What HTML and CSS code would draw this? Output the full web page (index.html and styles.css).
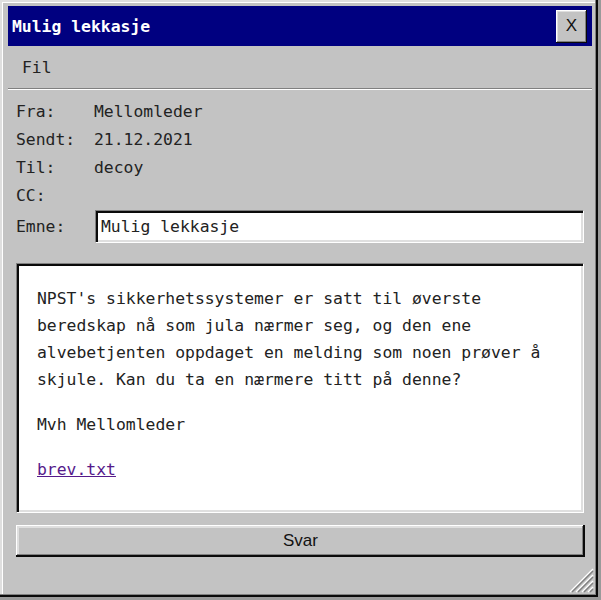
FILE: index.html
```html
<!DOCTYPE html>
<html lang="no">
<head>
<meta charset="utf-8">
<title>Mulig lekkasje</title>
<link rel="stylesheet" href="styles.css">
</head>
<body>
<div class="window">
  <div class="titlebar">
    <span class="title">Mulig lekkasje</span>
    <button class="close" type="button">X</button>
  </div>
  <div class="menubar">
    <span class="menu-item">Fil</span>
  </div>
  <div class="content">
    <div class="fields">
      <span class="label">Fra:</span><span class="value">Mellomleder</span>
      <span class="label">Sendt:</span><span class="value">21.12.2021</span>
      <span class="label">Til:</span><span class="value">decoy</span>
      <span class="label">CC:</span><span class="value"></span>
      <span class="label">Emne:</span><span class="value"><span class="subject">Mulig lekkasje</span></span>
    </div>
    <div class="message">
      <p>NPST's sikkerhetssystemer er satt til øverste beredskap nå som jula nærmer seg, og den ene alvebetjenten oppdaget en melding som noen prøver å skjule. Kan du ta en nærmere titt på denne?</p>
      <p>Mvh Mellomleder</p>
      <p><a class="attachment" href="#">brev.txt</a></p>
    </div>
    <button class="reply" type="button">Svar</button>
  </div>
  <svg class="grip" width="26" height="26" viewBox="0 0 26 26">
    <line x1="25" y1="2" x2="2" y2="25" stroke="#ffffff" stroke-width="1.5"/>
    <line x1="25" y1="4" x2="4" y2="25" stroke="#808080" stroke-width="1.5"/>
    <line x1="25" y1="8" x2="8" y2="25" stroke="#ffffff" stroke-width="1.5"/>
    <line x1="25" y1="10" x2="10" y2="25" stroke="#808080" stroke-width="1.5"/>
    <line x1="25" y1="14" x2="14" y2="25" stroke="#ffffff" stroke-width="1.5"/>
    <line x1="25" y1="16" x2="16" y2="25" stroke="#808080" stroke-width="1.5"/>
    <line x1="25" y1="20" x2="20" y2="25" stroke="#ffffff" stroke-width="1.5"/>
    <line x1="25" y1="22" x2="22" y2="25" stroke="#808080" stroke-width="1.5"/>
  </svg>
</div>
</body>
</html>
```
FILE: styles.css
```css
html, body {
  margin: 0;
  padding: 0;
}
body {
  background: #9a9a9a;
  width: 601px;
  height: 600px;
  overflow: hidden;
}
.window {
  position: relative;
  box-sizing: border-box;
  width: 598px;
  height: 597px;
  background: #c3c3c3;
  padding: 6px 6px 4px 8px;
  box-shadow: inset -2px -2px #0a0a0a, inset -3px -3px #808080, inset 2px 2px #dfdfdf, inset 3px 3px #ffffff;
  font-family: "DejaVu Sans Mono", "Liberation Mono", monospace;
  font-size: 16.4px;
  color: #222222;
}
.titlebar {
  height: 40px;
  background: #000080;
  display: flex;
  align-items: center;
  justify-content: space-between;
  padding: 0 5px 0 4px;
}
.title {
  color: #ffffff;
  font-weight: bold;
}
.close {
  width: 31px;
  height: 33px;
  border: 0;
  padding: 0;
  background: #c3c3c3;
  box-shadow: inset -1px -1px #0a0a0a, inset 1px 1px #ffffff, inset -2px -2px #808080, inset 2px 2px #dfdfdf;
  font-family: "Liberation Sans", Arial, sans-serif;
  font-size: 17px;
  color: #111111;
}
.menubar {
  height: 42px;
  display: flex;
  align-items: center;
  padding-left: 14px;
  border-bottom: 1px solid #808080;
  box-shadow: 0 1px #ffffff;
}
.content {
  padding: 8px 0 0 8px;
  width: 568px;
}
.fields {
  display: grid;
  grid-template-columns: 78px 1fr;
  grid-template-rows: repeat(4, 28px) 35px;
  align-items: center;
}
.subject {
  box-sizing: border-box;
  margin-left: 1px;
  width: 489px;
  height: 33px;
  display: flex;
  align-items: center;
  padding-left: 5px;
  background: #ffffff;
  border: 1px solid;
  border-color: #808080 #ffffff #ffffff #808080;
  box-shadow: inset 2px 2px #0a0a0a, inset -2px -2px #dfdfdf;
}
.message {
  box-sizing: border-box;
  margin-top: 19px;
  height: 250px;
  background: #ffffff;
  padding: 21px 20px;
  line-height: 27px;
  border: 1px solid;
  border-color: #808080 #ffffff #ffffff #808080;
  box-shadow: inset 2px 2px #0a0a0a, inset -2px -2px #dfdfdf;
}
.message p {
  margin: 0 0 18px;
}
.attachment {
  color: #551a8b;
}
.reply {
  display: block;
  margin-top: 12px;
  width: 569px;
  height: 32px;
  border: 0;
  padding: 0;
  background: #c3c3c3;
  box-shadow: inset -2px -2px #0a0a0a, inset 1px 1px #ffffff, inset -3px -3px #808080, inset 3px 3px #dfdfdf, inset 2px 2px #ffffff;
  font-family: "Liberation Sans", Arial, sans-serif;
  font-size: 17px;
  color: #111111;
}
.grip {
  position: absolute;
  right: 4px;
  bottom: 4px;
}
```
